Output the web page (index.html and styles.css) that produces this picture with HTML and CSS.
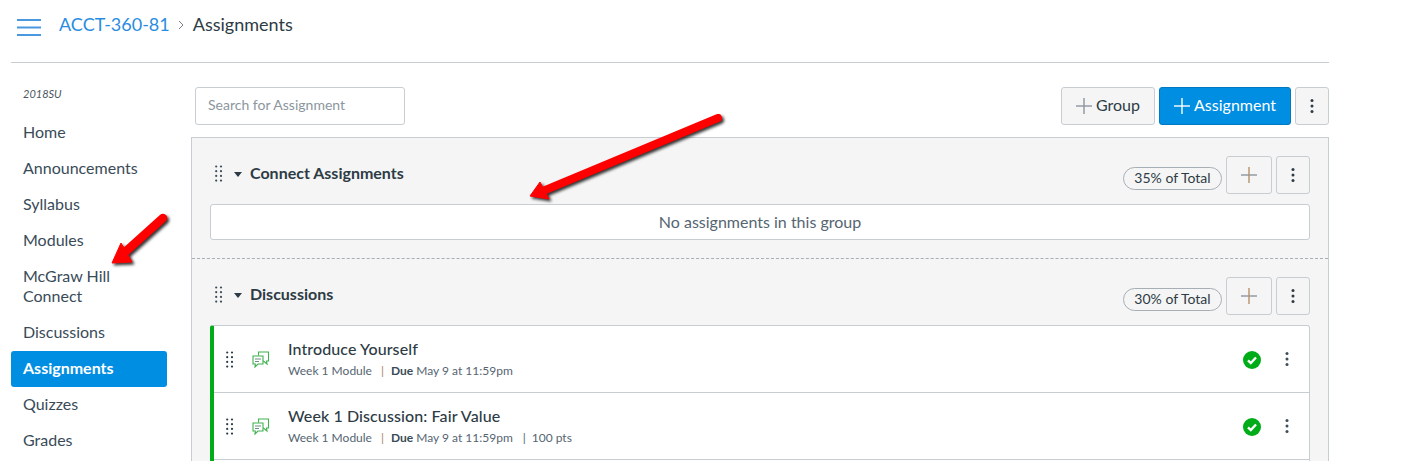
FILE: index.html
```html
<!DOCTYPE html>
<html lang="en">
<head>
<meta charset="utf-8">
<title>Assignments</title>
<link rel="stylesheet" href="styles.css">
</head>
<body>
<svg width="0" height="0" class="defs">
  <defs>
    <g id="grip"><circle cx="1.2" cy="1.500" r="1.1"/><circle cx="6" cy="1.500" r="1.1"/><circle cx="1.2" cy="6.200" r="1.1"/><circle cx="6" cy="6.200" r="1.1"/><circle cx="1.2" cy="10.900" r="1.1"/><circle cx="6" cy="10.900" r="1.1"/><circle cx="1.2" cy="15.600" r="1.1"/><circle cx="6" cy="15.600" r="1.1"/></g>
    <g id="kebab"><circle cx="2" cy="2.500" r="1.500"/><circle cx="2" cy="8" r="1.500"/><circle cx="2" cy="13.500" r="1.500"/></g>
    <g id="plus"><path class="plus-h" d="M0 8h16" stroke-width="1.400"/><path class="plus-v" d="M8 0v16" stroke-width="1.400"/></g>
    <g id="disc"><path d="M6.500 4.500V1h10v9h-2l.5 3-3.500-3H11" fill="none" stroke="#3fb24f" stroke-width="1.100"/><path d="M1 5h10v8H6l-3 3 .3-3H1z" fill="#fff" stroke="#3fb24f" stroke-width="1.100"/><path d="M3 8h6M3 10.500h4" stroke="#6b8f80" stroke-width="1"/></g>
    <g id="check"><circle cx="9" cy="9" r="9" fill="#00ac18"/><path d="M5 9.300l2.800 2.700L13 6.500" fill="none" stroke="#fff" stroke-width="2.400"/></g>
  </defs>
</svg>
<header class="topbar">
  <svg class="burger" width="24" height="17" viewBox="0 0 24 17"><path d="M0 1h24M0 8.500h24M0 16h24" stroke="#4a98e0" stroke-width="2"/></svg>
  <a class="crumb-link">ACCT-360-81</a>
  <svg class="crumb-sep" width="6" height="10" viewBox="0 0 6 10"><path d="M1 1l4 4-4 4" fill="none" stroke="#73818c" stroke-width="1"/></svg>
  <span class="crumb-current">Assignments</span>
</header>
<div class="layout">
  <nav class="sidebar">
    <div class="term">2018SU</div>
    <a class="nav-item">Home</a>
    <a class="nav-item">Announcements</a>
    <a class="nav-item">Syllabus</a>
    <a class="nav-item">Modules</a>
    <a class="nav-item">McGraw Hill<br>Connect</a>
    <a class="nav-item">Discussions</a>
    <a class="nav-item active">Assignments</a>
    <a class="nav-item">Quizzes</a>
    <a class="nav-item">Grades</a>
  </nav>
  <main class="main">
    <div class="toolbar">
      <div class="search">Search for Assignment</div>
      <button class="btn btn-group"><svg class="plus-icon" width="16" height="16" viewBox="0 0 16 16"><use href="#plus"/></svg>Group</button>
      <button class="btn btn-primary"><svg class="plus-icon" width="16" height="16" viewBox="0 0 16 16"><use href="#plus"/></svg>Assignment</button>
      <button class="btn btn-kebab"><svg width="4" height="16" viewBox="0 0 4 16"><use href="#kebab"/></svg></button>
    </div>
    <div class="panel">
      <section class="group">
        <div class="group-head">
          <svg class="grip" width="8" height="18" viewBox="0 0 8 18"><use href="#grip"/></svg>
          <span class="caret"></span>
          <h2 class="group-title">Connect Assignments</h2>
          <span class="pill">35% of Total</span>
          <button class="btn btn-add"><svg width="16" height="16" viewBox="0 0 16 16"><use href="#plus"/></svg></button>
          <button class="btn btn-kebab"><svg width="4" height="16" viewBox="0 0 4 16"><use href="#kebab"/></svg></button>
        </div>
        <div class="empty">No assignments in this group</div>
      </section>
      <section class="group group-second">
        <div class="group-head">
          <svg class="grip" width="8" height="18" viewBox="0 0 8 18"><use href="#grip"/></svg>
          <span class="caret"></span>
          <h2 class="group-title">Discussions</h2>
          <span class="pill">30% of Total</span>
          <button class="btn btn-add"><svg width="16" height="16" viewBox="0 0 16 16"><use href="#plus"/></svg></button>
          <button class="btn btn-kebab"><svg width="4" height="16" viewBox="0 0 4 16"><use href="#kebab"/></svg></button>
        </div>
        <div class="list">
          <article class="row">
            <svg class="row-grip" width="8" height="18" viewBox="0 0 8 18"><use href="#grip"/></svg>
            <svg class="disc" width="18" height="17" viewBox="0 0 18 17"><use href="#disc"/></svg>
            <div class="row-text">
              <div class="row-title">Introduce Yourself</div>
              <div class="row-meta">Week 1 Module<span class="sep">|</span><b>Due</b> May 9 at 11:59pm</div>
            </div>
            <svg class="check" width="18" height="18" viewBox="0 0 18 18"><use href="#check"/></svg>
            <svg class="row-kebab" width="4" height="16" viewBox="0 0 4 16"><use href="#kebab"/></svg>
          </article>
          <article class="row">
            <svg class="row-grip" width="8" height="18" viewBox="0 0 8 18"><use href="#grip"/></svg>
            <svg class="disc" width="18" height="17" viewBox="0 0 18 17"><use href="#disc"/></svg>
            <div class="row-text">
              <div class="row-title">Week 1 Discussion: Fair Value</div>
              <div class="row-meta">Week 1 Module<span class="sep">|</span><b>Due</b> May 9 at 11:59pm<span class="sep sep-pts">|</span>100 pts</div>
            </div>
            <svg class="check" width="18" height="18" viewBox="0 0 18 18"><use href="#check"/></svg>
            <svg class="row-kebab" width="4" height="16" viewBox="0 0 4 16"><use href="#kebab"/></svg>
          </article>
          <article class="row"></article>
        </div>
      </section>
    </div>
  </main>
</div>
<svg class="arrow arrow-main" width="210" height="100" viewBox="0 0 210 100">
  <path d="M189 7L14 80" stroke="#f00" stroke-width="8" stroke-linecap="round" fill="none"/>
  <path d="M1 85L11 71L20 88z" fill="#f00" stroke="#f00" stroke-width="1" stroke-linejoin="round"/>
</svg>
<svg class="arrow arrow-side" width="70" height="64" viewBox="0 0 70 64">
  <path d="M53 7L13 43" stroke="#f00" stroke-width="8.500" stroke-linecap="round" fill="none"/>
  <path d="M2 52L11 32L22 51z" fill="#f00" stroke="#f00" stroke-width="1" stroke-linejoin="round"/>
</svg>
</body>
</html>
```
FILE: styles.css
```css
* { box-sizing: border-box; }
html, body { margin: 0; padding: 0; }
body {
  position: relative;
  height: 461px;
  overflow: hidden;
  background: #fff;
  color: #2d3b45;
  font-family: Lato, "Liberation Sans", sans-serif;
  font-size: 16px;
}
.defs { position: absolute; }
.plus-h { stroke: currentColor; }
.plus-v { stroke: var(--plus-v, currentColor); }
.topbar {
  display: flex;
  align-items: center;
  width: 1318px;
  height: 63px;
  margin-left: 11px;
  padding: 0 0 14px 6px;
  border-bottom: 1px solid #c7cdd1;
  font-size: 18px;
}
.burger { margin-right: 18px; margin-top: 6px; }
.crumb-link { color: #2a8ce0; }
.crumb-sep { margin: 2px 9px 0 8px; }
.crumb-current { color: #2d3b45; }
.layout { display: flex; margin-left: 11px; }
.sidebar { width: 156px; flex: none; }
.term {
  height: 51px;
  padding: 24px 0 0 12px;
  font-size: 11px;
  font-style: italic;
  line-height: 14px;
  color: #4a5660;
}
.nav-item {
  display: block;
  padding: 8px 12px;
  line-height: 20px;
  color: #394b58;
}
.nav-item.active {
  margin: 1px 0 -1px;
  padding: 7px 12px 9px;
  background: #008ee2;
  color: #fff;
  font-weight: 700;
  border-radius: 3px;
}
.main { width: 1138px; margin-left: 24px; flex: none; }
.toolbar {
  display: flex;
  gap: 4px;
  height: 38px;
  margin-top: 24px;
  padding-left: 4px;
}
.search {
  width: 210px;
  height: 38px;
  margin-right: auto;
  padding: 0 12px;
  line-height: 34px;
  font-size: 14px;
  color: #8b969e;
  background: #fff;
  border: 1px solid #c7cdd1;
  border-radius: 3px;
}
.btn {
  display: flex;
  align-items: center;
  justify-content: center;
  height: 38px;
  padding: 0;
  font: inherit;
  color: #2d3b45;
  background: #f5f5f5;
  border: 1px solid #c7cdd1;
  border-radius: 3px;
}
.toolbar .btn-group, .toolbar .btn-primary { padding-bottom: 4px; }
.plus-icon { margin-top: 4px; }
.btn-group { width: 94px; }
.btn-group .plus-icon { color: #8d959f; margin-right: 4px; }
.btn-primary {
  width: 132px;
  color: #fff;
  background: #008ee2;
  border-color: #0079c1;
}
.btn-primary .plus-icon { margin-right: 4px; }
.btn-kebab { width: 34px; fill: #2d3b45; }
.btn-add { width: 46px; color: #8d959f; --plus-v: #b5926a; margin-right: 4px; }
.panel {
  margin-top: 12px;
  background: #f5f5f5;
  border: 1px solid #c7cdd1;
  border-bottom: 0;
}
.group { padding: 18px; }
.group-second { border-top: 1px dashed #a5afb5; }
.group-head { display: flex; align-items: center; height: 38px; }
.grip { margin: -2px 0 0 5px; fill: #3d4d59; }
.caret {
  width: 0;
  height: 0;
  margin: -2px 0 0 11px;
  border-left: 4px solid transparent;
  border-right: 4px solid transparent;
  border-top: 5px solid #2d3b45;
}
.group-title {
  flex: 1;
  margin: -5px 0 0 8px;
  font-size: 16px;
  font-weight: 700;
  color: #2d3b45;
}
.pill {
  width: 99px;
  height: 23px;
  margin: 6px 4px 0 0;
  text-align: center;
  font-size: 14px;
  line-height: 19px;
  color: #2d3b45;
  border: 1px solid #a5afb5;
  border-radius: 12px;
}
.empty {
  height: 36px;
  margin-top: 10px;
  text-align: center;
  line-height: 33px;
  color: #556572;
  background: #fff;
  border: 1px solid #c7cdd1;
  border-radius: 3px;
}
.list {
  margin-top: 10px;
  background: #fff;
  border: 1px solid #c7cdd1;
  border-left: 4px solid #00ac18;
  border-radius: 3px 3px 0 0;
}
.row {
  display: flex;
  align-items: flex-start;
  height: 67px;
  border-bottom: 1px solid #c7cdd1;
}
.row-grip { margin: 25px 0 0 12px; fill: #2d3b45; flex: none; }
.disc { margin: 25px 0 0 18px; flex: none; }
.row-text { flex: 1; margin-left: 18px; padding-top: 12px; }
.row-title { font-size: 16px; font-weight: 500; line-height: 22px; letter-spacing: .1px; margin-bottom: 1px; color: #2d3b45; }
.row-meta { font-size: 12px; line-height: 20px; color: #556572; }
.row-meta b { color: #394b58; }
.sep { margin: 0 7px 0 9px; color: #a9815a; }
.sep-pts { margin: 0 6px 0 10px; color: #556572; }
.check { margin: 25px 0 0 0; flex: none; }
.row-kebab { margin: 25px 20px 0 24px; fill: #3d4d59; flex: none; }
.arrow {
  position: absolute;
  filter: drop-shadow(2px 2px 1.500px rgba(0,0,0,.8));
  pointer-events: none;
}
.arrow-main { left: 529px; top: 111px; }
.arrow-side { left: 110px; top: 211px; }
```
